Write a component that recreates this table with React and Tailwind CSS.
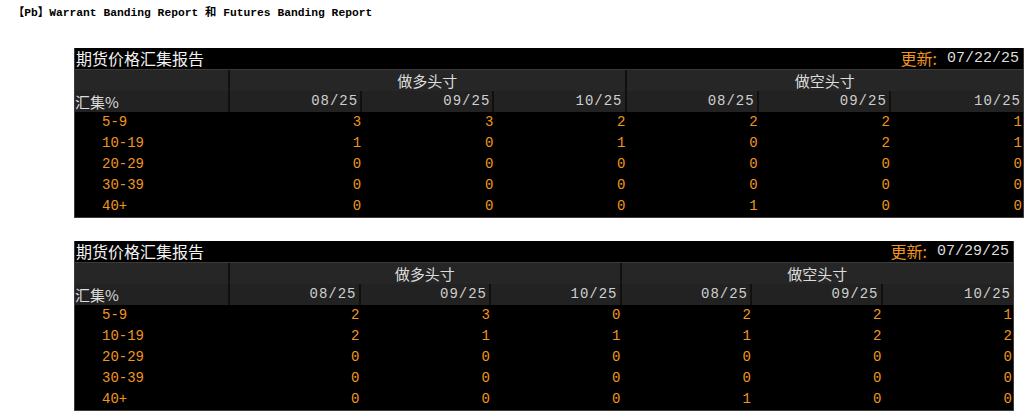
import React from "react";

const mono = "font-['Liberation_Mono','Noto_Sans_CJK_SC',monospace]";
const cjk = "font-['Noto_Sans_CJK_SC','Noto_Sans',sans-serif]";

const labels = ["5-9", "10-19", "20-29", "30-39", "40+"];
const months = ["08/25", "09/25", "10/25", "08/25", "09/25", "10/25"];

const reports = [
  {
    updated: "07/22/25",
    width: "w-[950px]",
    rows: [
      [3, 3, 2, 2, 2, 1],
      [1, 0, 1, 0, 2, 1],
      [0, 0, 0, 0, 0, 0],
      [0, 0, 0, 0, 0, 0],
      [0, 0, 0, 1, 0, 0],
    ],
  },
  {
    updated: "07/29/25",
    width: "w-[940px]",
    rows: [
      [2, 3, 0, 2, 2, 1],
      [2, 1, 1, 1, 2, 2],
      [0, 0, 0, 0, 0, 0],
      [0, 0, 0, 0, 0, 0],
      [0, 0, 0, 1, 0, 0],
    ],
  },
];

const gridCols = "grid grid-cols-[155px_repeat(6,minmax(0,1fr))]";

const BandingTable = ({ report }) => {
  return (
    <div className={`${report.width} bg-black border-x border-b border-[#3c3c3c]`}>
      <div className="h-[21px] flex items-center justify-between pr-[4px]">
        <span className={`${cjk} text-[16px] leading-[21px] text-[#f2f2f2] pl-[1px]`}>期货价格汇集报告</span>
        <span className="flex items-center gap-[10px]">
          <span className={`${cjk} text-[16px] leading-[21px] text-[#f0961e]`}>更新:</span>
          <span className={`${mono} text-[15px] leading-[21px] text-[#dedede]`}>{report.updated}</span>
        </span>
      </div>

      <div className={`${gridCols} h-[22px] bg-[#262626] border-t border-[#3a3a3a]`}>
        <div className="border-r-2 border-[#101010]" />
        <div className={`col-span-3 border-r-2 border-[#101010] ${cjk} text-[15px] leading-[21px] text-[#dcdcdc] text-center`}>做多头寸</div>
        <div className={`col-span-3 ${cjk} text-[15px] leading-[21px] text-[#dcdcdc] text-center`}>做空头寸</div>
      </div>

      <div className={`${gridCols} h-[21px] bg-[#222222]`}>
        <div className="border-r-2 border-[#101010]">
          <span className={`${cjk} block text-[15px] leading-[21px] text-[#dcdcdc]`}>汇集%</span>
        </div>
        {months.map((m, i) => (
          <div
            key={i}
            className={`${mono} text-[14px] leading-[21px] text-[#cfcfcf] text-right pr-[2px] tracking-[1px] ${i < 5 ? "border-r-2 border-[#101010]" : ""}`}
          >
            {m}
          </div>
        ))}
      </div>

      {report.rows.map((row, r) => (
        <div key={r} className={`${gridCols} h-[21px]`}>
          <div className={`${mono} text-[14px] leading-[21px] text-[#f0961e] pl-[27px]`}>{labels[r]}</div>
          {row.map((v, c) => (
            <div key={c} className={`${mono} text-[14px] leading-[21px] text-[#f0961e] text-right pr-[1px]`}>
              {v}
            </div>
          ))}
        </div>
      ))}
    </div>
  );
};

export default function App() {
  return (
    <div className="bg-white min-h-[411px] overflow-hidden">
      <div className={`${mono} font-bold text-[11.3px] leading-[14px] text-black pt-[6px] pl-[13px]`}>
        【Pb】Warrant Banding Report 和 Futures Banding Report
      </div>
      <div className="pl-[74px] pt-[28px] flex flex-col gap-[23px]">
        {reports.map((rep, i) => (
          <BandingTable key={i} report={rep} />
        ))}
      </div>
    </div>
  );
}
